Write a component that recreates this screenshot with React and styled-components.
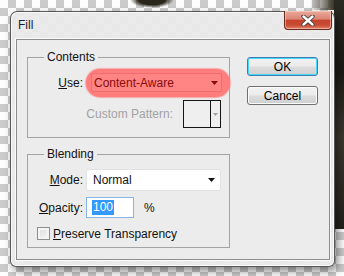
import styled, { createGlobalStyle } from "styled-components";

const Global = createGlobalStyle`
  body {
    margin: 0;
    font-family: "Liberation Sans", Arial, sans-serif;
    font-size: 12px;
  }
`;

const Page = styled.div`
  width: 344px;
  height: 276px;
  box-sizing: border-box;
  overflow: hidden;
  padding: 11px 0 0 10px;
  background:
    radial-gradient(ellipse 22px 8px at 152px 0, #2a261c 60%, transparent 100%),
    linear-gradient(180deg, #2b2a22 0%, #1c1b16 30%, #3c3a2e 60%, #23221b 100%) right 0 top 0 / 10px 229px no-repeat,
    linear-gradient(90deg, transparent, #3a3628) right 10px top 0 / 24px 10px no-repeat,
    conic-gradient(#cbcbcb 0 25%, #fdfdfd 0 50%, #cbcbcb 0 75%, #fdfdfd 0) 0 0 / 16px 16px;
`;

const Window = styled.div`
  width: 325px;
  height: 256px;
  box-sizing: border-box;
  display: flex;
  flex-direction: column;
  padding: 0 4px 6px 5px;
  border: 1px solid rgba(40, 40, 40, 0.75);
  border-radius: 7px 7px 6px 6px;
  background: rgba(233, 233, 233, 0.93);
  box-shadow: 3px 4px 8px rgba(0, 0, 0, 0.45), inset 0 0 0 1px rgba(255, 255, 255, 0.75);
`;

const TitleBar = styled.div`
  height: 27px;
  display: flex;
  justify-content: space-between;
  align-items: flex-start;
`;

const Title = styled.div`
  margin: 6px 0 0 2px;
  line-height: 14px;
  color: #1c1c3a;
`;

const CloseButton = styled.div`
  width: 48px;
  height: 19px;
  box-sizing: border-box;
  margin: -1px -2px 0 0;
  display: flex;
  align-items: center;
  justify-content: center;
  border: 1px solid #6a2a20;
  border-top: none;
  border-radius: 0 0 4px 4px;
  background: linear-gradient(#eaa99b 0%, #dc8574 45%, #c5432c 52%, #c94a33 78%, #e0836a 100%);
  box-shadow: inset 0 0 0 1px rgba(255, 220, 210, 0.5);
`;

const Client = styled.div`
  flex: 1;
  display: flex;
  gap: 17px;
  padding: 10px 0 0 10px;
  background: #ececec;
  border: 1px solid #8c8c8c;
  box-shadow: 0 0 0 1px rgba(255, 255, 255, 0.8);
`;

const LeftColumn = styled.div`
  width: 203px;
  display: flex;
  flex-direction: column;
  gap: 9px;
`;

const Group = styled.fieldset`
  margin: 0;
  min-width: 0;
  padding: 0 0 ${(p) => p.$bottom}px 0;
  border: 1px solid #a3a3a3;
`;

const Legend = styled.legend`
  margin-left: 16px;
  padding: 0 3px;
  line-height: 14px;
  color: #111;
`;

const Key = styled.span`
  text-decoration: underline;
`;

const Label = styled.span`
  line-height: 14px;
  color: ${(p) => (p.$disabled ? "#a2a2a2" : "#111")};
  white-space: nowrap;
`;

const UseRow = styled.div`
  margin: 5px -1px 0 0;
  display: flex;
  justify-content: flex-end;
  align-items: center;
  gap: 3px;
`;

const Highlight = styled.div`
  padding: 4px 8px 5px 5px;
  border-radius: 14px;
  background: #ff7d7d;
  box-shadow: 0 0 1px 1px rgba(255, 125, 125, 0.6);
`;

const Select = styled.div`
  width: ${(p) => p.$width}px;
  height: ${(p) => p.$height}px;
  box-sizing: border-box;
  display: flex;
  align-items: center;
  justify-content: space-between;
  padding: 0 ${(p) => p.$right}px 0 ${(p) => p.$left}px;
  border: 1px solid ${(p) => p.$border};
  background: ${(p) => p.$bg};
  color: ${(p) => p.$color};
  border-radius: 2px;
`;

const PatternRow = styled.div`
  margin: 3px 8px 0 0;
  display: flex;
  justify-content: flex-end;
  align-items: center;
  gap: 10px;
`;

const Swatch = styled.div`
  width: 38px;
  height: 28px;
  box-sizing: border-box;
  display: flex;
  border: 1px solid #151515;
  background: #efefef;
`;

const SwatchPreview = styled.div`
  width: 26px;
  border-right: 1px solid #151515;
`;

const SwatchArrow = styled.div`
  flex: 1;
  display: flex;
  align-items: center;
  justify-content: center;
`;

const BlendGrid = styled.div`
  margin-top: 8px;
  display: grid;
  grid-template-columns: 55px auto;
  column-gap: 3px;
  row-gap: 6px;
  align-items: center;
`;

const RightLabel = styled(Label)`
  text-align: right;
`;

const OpacityCell = styled.div`
  display: flex;
  align-items: center;
  gap: 10px;
`;

const Input = styled.div`
  width: 48px;
  height: 21px;
  box-sizing: border-box;
  display: flex;
  align-items: center;
  padding-left: 5px;
  border: 1px solid #86b6e8;
  background: #fff;
`;

const Selected = styled.span`
  padding: 0 1px;
  line-height: 15px;
  background: #3399ff;
  color: #fff;
`;

const CheckRow = styled.div`
  margin: 8px 0 0 9px;
  height: 15px;
  display: flex;
  align-items: center;
  gap: 3px;
`;

const CheckBox = styled.div`
  width: 13px;
  height: 13px;
  box-sizing: border-box;
  border: 1px solid #8e8f8f;
  background: linear-gradient(135deg, #dcdcdc, #f6f6f6);
  box-shadow: inset 0 0 0 2px #f4f4f4;
`;

const Buttons = styled.div`
  margin-top: 7px;
  display: flex;
  flex-direction: column;
  gap: 10px;
`;

const Button = styled.div`
  width: 71px;
  height: 19px;
  box-sizing: border-box;
  display: flex;
  align-items: center;
  justify-content: center;
  border: 1px solid ${(p) => (p.$default ? "#3c7fb1" : "#707070")};
  border-radius: 3px;
  background: linear-gradient(#f2f2f2 0%, #ebebeb 48%, #dddddd 52%, #cfcfcf 100%);
  box-shadow: inset 0 0 0 1px ${(p) => (p.$default ? "#48d7fb" : "#fcfcfc")};
  color: #000;
`;

function Arrow({ color }) {
  return (
    <svg width="7" height="4" viewBox="0 0 7 4">
      <path d="M0 0H7L3.5 4Z" fill={color} />
    </svg>
  );
}

function CloseGlyph() {
  return (
    <svg width="14" height="11" viewBox="0 0 14 11">
      <path d="M2.5 1.5L11.5 9.5M11.5 1.5L2.5 9.5" stroke="#3a3a3a" strokeWidth="4.2" strokeLinecap="round" />
      <path d="M2.5 1.5L11.5 9.5M11.5 1.5L2.5 9.5" stroke="#fff" strokeWidth="2.4" strokeLinecap="round" />
    </svg>
  );
}

export default function App() {
  return (
    <Page>
      <Global />
      <Window>
        <TitleBar>
          <Title>Fill</Title>
          <CloseButton>
            <CloseGlyph />
          </CloseButton>
        </TitleBar>
        <Client>
          <LeftColumn>
            <Group $bottom={9}>
              <Legend>Contents</Legend>
              <UseRow>
                <Label>
                  <Key>U</Key>se:
                </Label>
                <Highlight>
                  <Select $width={131} $height={19} $left={2} $right={3} $border="#ee6e6e" $bg="#ff8585" $color="#8a0a0a">
                    Content-Aware
                    <Arrow color="#8a0a0a" />
                  </Select>
                </Highlight>
              </UseRow>
              <PatternRow>
                <Label $disabled>Custom Pattern:</Label>
                <Swatch>
                  <SwatchPreview />
                  <SwatchArrow>
                    <svg width="5" height="3" viewBox="0 0 5 3">
                      <path d="M0 0H5L2.5 3Z" fill="#a0a0a0" />
                    </svg>
                  </SwatchArrow>
                </Swatch>
              </PatternRow>
            </Group>
            <Group $bottom={6}>
              <Legend>Blending</Legend>
              <BlendGrid>
                <RightLabel>
                  <Key>M</Key>ode:
                </RightLabel>
                <Select $width={135} $height={22} $left={6} $right={5} $border="#e2e2e2" $bg="#fff" $color="#111">
                  Normal
                  <Arrow color="#111" />
                </Select>
                <RightLabel>
                  <Key>O</Key>pacity:
                </RightLabel>
                <OpacityCell>
                  <Input>
                    <Selected>100</Selected>
                  </Input>
                  <Label>%</Label>
                </OpacityCell>
              </BlendGrid>
              <CheckRow>
                <CheckBox />
                <Label>
                  <Key>P</Key>reserve Transparency
                </Label>
              </CheckRow>
            </Group>
          </LeftColumn>
          <Buttons>
            <Button $default>OK</Button>
            <Button>Cancel</Button>
          </Buttons>
        </Client>
      </Window>
    </Page>
  );
}
